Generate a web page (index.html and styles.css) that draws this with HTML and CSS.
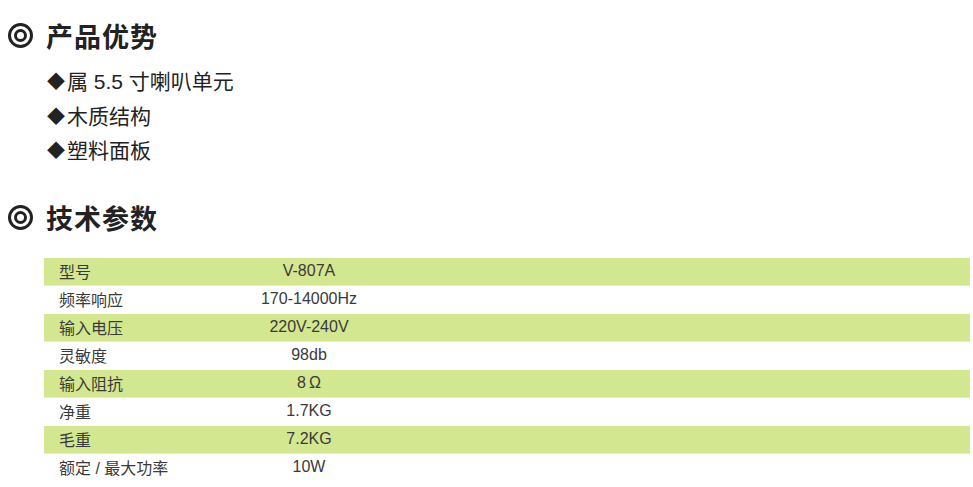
FILE: index.html
```html
<!DOCTYPE html>
<html lang="zh-CN">
<head>
    <meta charset="UTF-8">
    <meta name="viewport" content="width=device-width, initial-scale=1.0">
    <title>产品优势</title>
    <link rel="stylesheet" href="styles.css">
</head>
<body>
    <h2 class="section-title"><span class="ring"></span>产品优势</h2>
    <ul class="features">
        <li>属 5.5 寸喇叭单元</li>
        <li>木质结构</li>
        <li>塑料面板</li>
    </ul>

    <h2 class="section-title second"><span class="ring"></span>技术参数</h2>
    <div class="specs">
        <div class="row"><span class="label">型号</span><span class="value">V-807A</span></div>
        <div class="row"><span class="label">频率响应</span><span class="value">170-14000Hz</span></div>
        <div class="row"><span class="label">输入电压</span><span class="value">220V-240V</span></div>
        <div class="row"><span class="label">灵敏度</span><span class="value">98db</span></div>
        <div class="row"><span class="label">输入阻抗</span><span class="value">8&thinsp;Ω</span></div>
        <div class="row"><span class="label">净重</span><span class="value">1.7KG</span></div>
        <div class="row"><span class="label">毛重</span><span class="value">7.2KG</span></div>
        <div class="row"><span class="label">额定 / 最大功率</span><span class="value">10W</span></div>
    </div>
</body>
</html>
```

FILE: styles.css
```css
body {
    margin: 0;
    padding: 0;
    background: #fff;
    color: #333;
    font-family: "Liberation Sans", "Noto Sans CJK SC", sans-serif;
}
.section-title {
    display: flex;
    align-items: center;
    margin: 15px 0 0 8px;
    height: 40px;
    font-family: "Noto Sans CJK SC", serif;
    font-size: 27px;
    font-weight: bold;
    color: #222;
    letter-spacing: 1px;
}
.section-title.second {
    margin-top: 29px;
}
.ring {
    display: inline-block;
    box-sizing: border-box;
    width: 25px;
    height: 25px;
    border: 3.5px solid #222;
    border-radius: 50%;
    margin-right: 13px;
    position: relative;
}
.ring::after {
    content: "";
    position: absolute;
    left: 3px;
    top: 3px;
    right: 3px;
    bottom: 3px;
    border: 3px solid #222;
    border-radius: 50%;
}
.features {
    list-style: none;
    margin: 10px 0 0 47px;
    padding: 0;
}
.features li {
    height: 34.5px;
    line-height: 34.5px;
    font-size: 21px;
    color: #222;
}
.features li::before {
    content: "◆";
    display: inline-block;
    width: 20px;
    font-size: 18px;
    vertical-align: top;
}
.specs {
    margin: 20px 3px 0 44px;
}
.row {
    display: flex;
    align-items: center;
    height: 27px;
    border-bottom: 1px solid #fff;
    font-size: 16px;
    color: #3a3a3a;
}
.row:nth-child(odd) {
    background: #d3e690;
    border-bottom-color: #e6f0c0;
}
.label {
    width: 145px;
    padding-left: 15px;
}
.value {
    width: 210px;
    text-align: center;
}
```
